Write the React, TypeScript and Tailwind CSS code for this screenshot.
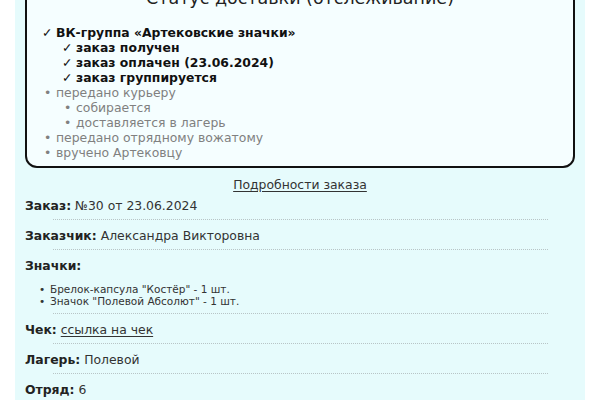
import React from "react";

const font = { fontFamily: '"DejaVu Sans", Verdana, sans-serif' };

function Done({ children, nested }: { children: React.ReactNode; nested?: boolean }) {
  return (
    <li className={`flex font-bold text-[#111] ${nested ? "pl-[20px]" : ""}`}>
      <span className="w-[14px] shrink-0">✓</span>
      <span>{children}</span>
    </li>
  );
}

function Pending({ children, nested }: { children: React.ReactNode; nested?: boolean }) {
  return (
    <li className={`flex text-[#808080] ${nested ? "pl-[20px]" : ""}`}>
      <span className="w-[14px] shrink-0 pl-[2px]">•</span>
      <span>{children}</span>
    </li>
  );
}

function Divider() {
  return <div className="mx-auto mt-[5px] mb-[8px] w-[90%] border-t border-dotted border-[#b8c4c6]" />;
}

function Row({ label, children, last }: { label: string; children: React.ReactNode; last?: boolean }) {
  return (
    <div>
      <div className="text-[12.4px] leading-[16px] text-[#333]">
        <b className="text-[#222]">{label}</b> {children}
      </div>
      {!last && <Divider />}
    </div>
  );
}

export default function App() {
  return (
    <div className="h-[400px] w-[600px] overflow-hidden bg-white" style={font}>
      <div className="mx-[15px] -mt-[17px] bg-[#e6fbfc] px-[10px] pb-[20px]">
        <div className="rounded-[12px] border-2 border-[#111] bg-[#f5feff] px-[15px] pb-[6px]">
          <div className="pt-[1px] text-center text-[17.5px] leading-[24px] text-[#222]">Статус доставки (отслеживание)</div>
          <ul className="mt-[15px] text-[12.4px] leading-[15px]">
            <Done>ВК-группа «Артековские значки»</Done>
            <Done nested>заказ получен</Done>
            <Done nested>заказ оплачен (23.06.2024)</Done>
            <Done nested>заказ группируется</Done>
            <Pending>передано курьеру</Pending>
            <Pending nested>собирается</Pending>
            <Pending nested>доставляется в лагерь</Pending>
            <Pending>передано отрядному вожатому</Pending>
            <Pending>вручено Артековцу</Pending>
          </ul>
        </div>
        <div className="mt-[9px] text-center text-[12.4px] leading-[16px] text-[#333]">
          <a className="underline underline-offset-2">Подробности заказа</a>
        </div>
        <div className="mt-[5px]">
          <Row label="Заказ:">№30 от 23.06.2024</Row>
          <Row label="Заказчик:">Александра Викторовна</Row>
          <div>
            <div className="text-[12.4px] leading-[16px]">
              <b className="text-[#222]">Значки:</b>
            </div>
            <ul className="mt-[9px] pl-[14px] text-[10.5px] leading-[12px] text-[#333]">
              <li className="flex">
                <span className="w-[11px] shrink-0">•</span>
                <span>Брелок-капсула "Костёр" - 1 шт.</span>
              </li>
              <li className="flex">
                <span className="w-[11px] shrink-0">•</span>
                <span>Значок "Полевой Абсолют" - 1 шт.</span>
              </li>
            </ul>
            <div className="mx-auto mt-[6px] mb-[8px] w-[90%] border-t border-dotted border-[#b8c4c6]" />
          </div>
          <Row label="Чек:">
            <a className="underline underline-offset-2">ссылка на чек</a>
          </Row>
          <Row label="Лагерь:">Полевой</Row>
          <Row label="Отряд:" last>6</Row>
        </div>
      </div>
    </div>
  );
}
